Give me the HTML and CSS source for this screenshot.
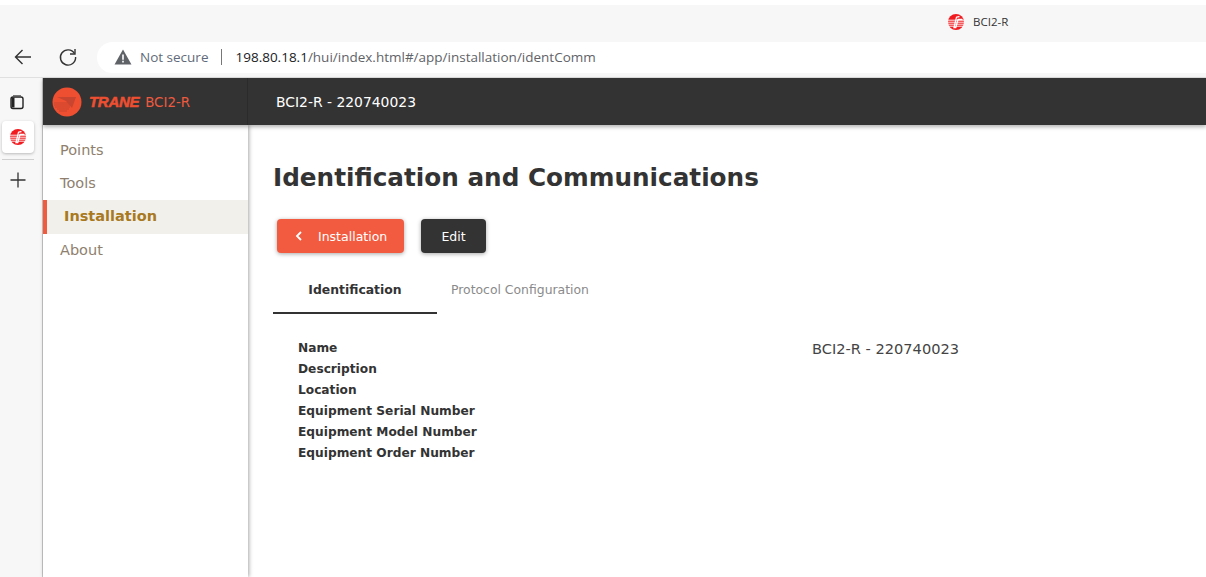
FILE: index.html
```html
<!DOCTYPE html>
<html lang="en">
<head>
<meta charset="utf-8">
<title>BCI2-R</title>
<link rel="stylesheet" href="styles.css">
</head>
<body>
<div class="titlebar">
  <div class="tab">
    <svg class="favicon" viewBox="0 0 16 16"><use href="#fav"/></svg>
    <span>BCI2-R</span>
  </div>
</div>
<div class="toolbar">
  <svg class="tool-icon back" viewBox="0 0 20 20"><path d="M18 10H2.5M9.5 3l-7 7 7 7" fill="none" stroke="#333" stroke-width="1.4"/></svg>
  <svg class="tool-icon reload" viewBox="0 0 20 20"><path d="M16.5 6.5A7.6 7.6 0 1 0 17.6 10" fill="none" stroke="#333" stroke-width="1.4"/><path d="M17 2v5h-5" fill="none" stroke="#333" stroke-width="1.4"/></svg>
  <div class="omnibox">
    <svg class="warn" viewBox="0 0 18 16"><path d="M9 0.5 17.5 15.5H0.5Z" fill="#5f6368"/><path d="M8.2 5.5h1.6v5.2H8.2zM8.2 11.8h1.6v1.6H8.2z" fill="#fff"/></svg>
    <span class="not-secure">Not secure</span>
    <span class="sep"></span>
    <span class="url"><b>198.80.18.1</b>/hui/index.html#/app/installation/identComm</span>
  </div>
</div>
<div class="window">
  <aside class="rail">
    <svg class="rail-icon" viewBox="0 0 16 16"><rect x="2" y="3" width="12" height="11.5" rx="2" fill="none" stroke="#222" stroke-width="1.4"/><path d="M2.5 3.5v10h3v-10z" fill="#222"/><path d="M4 1.5h8" stroke="#777" stroke-width="1"/></svg>
    <div class="rail-tab">
      <svg class="favicon" viewBox="0 0 16 16">
        <defs>
          <g id="fav">
            <circle cx="8" cy="8" r="8" fill="#f01a1f"/>
            <path d="M0 6.2h16M0 8.2h16M0 10.2h16M0 12.2h16" stroke="#fff" stroke-width="0.9"/>
            <path d="M11.5 2.5 8.5 3.2 6 13.5H7.8L10 5.5H14.5" fill="none" stroke="#fff" stroke-width="1.3"/>
          </g>
        </defs>
        <use href="#fav"/>
      </svg>
    </div>
    <span class="rail-rule"></span>
    <svg class="rail-plus" viewBox="0 0 16 16"><path d="M8 0.5v15M0.5 8h15" stroke="#333" stroke-width="1.3"/></svg>
  </aside>
  <div class="app">
    <header class="app-header">
      <div class="brand">
        <svg class="brand-mark" viewBox="0 0 30 30">
          <circle cx="15" cy="15" r="14.5" fill="#ee4f31"/>
          <path d="M2 16h18M2 18h17M3 20h15M5 22h12M7 24h8" stroke="#c9452f" stroke-width="1"/>
          <path d="M5 10 24 10 20 21 14 14Z" fill="#c9452f"/>
        </svg>
        <span class="brand-word">TRANE</span>
        <span class="brand-name">BCI2-R</span>
      </div>
      <div class="device-title">BCI2-R - 220740023</div>
    </header>
    <div class="app-body">
      <nav class="side">
        <a class="side-item">Points</a>
        <a class="side-item">Tools</a>
        <a class="side-item active">Installation</a>
        <a class="side-item">About</a>
      </nav>
      <main class="content">
        <h1>Identification and Communications</h1>
        <div class="buttons">
          <button class="btn btn-primary"><svg class="chev" viewBox="0 0 8 10"><path d="M6 1 2 5l4 4" fill="none" stroke="#fff" stroke-width="1.8"/></svg>Installation</button>
          <button class="btn btn-dark">Edit</button>
        </div>
        <div class="tabs">
          <div class="tab-item current">Identification</div>
          <div class="tab-item">Protocol Configuration</div>
        </div>
        <div class="fields">
          <div class="labels">
            <div>Name</div>
            <div>Description</div>
            <div>Location</div>
            <div>Equipment Serial Number</div>
            <div>Equipment Model Number</div>
            <div>Equipment Order Number</div>
          </div>
          <div class="value">BCI2-R - 220740023</div>
        </div>
      </main>
    </div>
  </div>
</div>
</body>
</html>
```

FILE: styles.css
```css
* { box-sizing: border-box; }
html, body { height: 100%; }
body {
  margin: 0;
  height: 577px;
  overflow: hidden;
  display: flex;
  flex-direction: column;
  padding-top: 5px;
  background: #fff;
  font-family: "DejaVu Sans", sans-serif;
  color: #333;
}
.titlebar {
  height: 37px;
  flex: none;
  background: #f7f7f7;
  display: flex;
  padding-left: 948px;
}
.tab {
  display: flex;
  align-items: center;
  gap: 9px;
  height: 33px;
  font-family: "Open Sans", sans-serif;
  font-size: 11.5px;
  color: #333;
}
.favicon { width: 16px; height: 16px; display: block; }
.toolbar {
  height: 36px;
  flex: none;
  background: #f7f7f7;
  display: flex;
  align-items: flex-start;
  padding-left: 13px;
  border-bottom: 1px solid #e0e0e0;
}
.tool-icon { width: 20px; height: 20px; flex: none; margin-top: 5px; }
.reload { margin-left: 25px; }
.omnibox {
  margin-left: 19px;
  flex: 1;
  height: 31px;
  background: #fff;
  border-radius: 16px 0 0 16px;
  display: flex;
  align-items: center;
  padding: 0 0 1px 17px;
  font-family: "Open Sans", sans-serif;
  font-size: 13.5px;
}
.warn { width: 18px; height: 16px; flex: none; }
.not-secure { margin-left: 8px; color: #5f6b7a; }
.sep { width: 1px; height: 16px; background: #777; margin: 0 13px 0 13px; }
.url { color: #5f6368; }
.url b { font-weight: 400; color: #202124; }
.window { flex: 1; display: flex; min-height: 0; }
.rail {
  width: 43px;
  flex: none;
  background: #f7f7f7;
  border-right: 1px solid #c9c9c9;
  display: flex;
  flex-direction: column;
  align-items: center;
  padding-top: 16px;
}
.rail-icon { width: 16px; height: 16px; margin-left: -8px; }
.rail-tab {
  width: 32px;
  height: 32px;
  margin: 11px 0 0 -7px;
  background: #fff;
  border-radius: 4px;
  box-shadow: 0 1px 3px rgba(0,0,0,.25);
  display: flex;
  align-items: center;
  justify-content: center;
}
.rail-rule { width: 32px; height: 1px; background: #d0d0d0; margin: 6px 0 0 -7px; }
.rail-plus { width: 16px; height: 16px; margin: 12px 0 0 -6px; }
.app { flex: 1; display: flex; flex-direction: column; min-width: 0; }
.app-header {
  height: 47px;
  flex: none;
  background: #333;
  display: flex;
  align-items: center;
  box-shadow: 0 2px 4px rgba(0,0,0,.3);
  position: relative;
  z-index: 2;
}
.brand {
  width: 205px;
  height: 100%;
  display: flex;
  align-items: center;
  padding-left: 9px;
  border-right: 1px solid #2b2b2b;
}
.brand-mark { width: 30px; height: 30px; flex: none; }
.brand-word {
  margin-left: 7px;
  font-family: "Liberation Sans", sans-serif;
  font-weight: 700;
  font-style: italic;
  font-size: 15px;
  letter-spacing: -0.3px;
  color: #ee4f31;
  -webkit-text-stroke: 0.5px #ee4f31;
}
.brand-name { margin: 1px 0 0 6px; font-size: 13.4px; color: #ed5a3f; }
.device-title { margin: 1px 0 0 28px; font-size: 13.9px; color: #fff; }
.app-body { flex: 1; display: flex; min-height: 0; }
.side {
  width: 205px;
  flex: none;
  background: #fff;
  box-shadow: 1px 0 4px rgba(0,0,0,.35);
  padding-top: 9px;
  position: relative;
  z-index: 1;
}
.side-item {
  display: block;
  height: 33px;
  line-height: 33px;
  padding-left: 17px;
  font-size: 14.5px;
  color: #8f7f6e;
}
.side-item.active {
  height: 34px;
  background: #f2f0ea;
  border-left: 4px solid #f15a3c;
  font-weight: 700;
  color: #a8791f;
  font-size: 14.5px;
  padding-left: 17px;
}
.content { flex: 1; min-width: 0; padding: 37px 0 0 25px; }
h1 {
  margin: 0;
  font-size: 24.7px;
  line-height: 32px;
  font-weight: 700;
  color: #333;
}
.buttons { display: flex; gap: 17px; margin: 25px 0 0 4px; }
.btn {
  height: 34px;
  border: 0;
  border-radius: 4px;
  color: #fff;
  font-family: "DejaVu Sans", sans-serif;
  font-size: 12.5px;
  display: flex;
  align-items: center;
  box-shadow: 0 1px 4px rgba(0,0,0,.35);
}
.btn-primary { width: 127px; background: #f35b40; padding-left: 18px; }
.chev { width: 8px; height: 10px; margin-right: 15px; }
.btn-dark { width: 65px; background: #333; justify-content: center; }
.tabs { display: flex; margin-top: 20px; }
.tab-item {
  height: 41px;
  line-height: 33px;
  font-size: 12.4px;
  color: #8a8a8a;
  padding: 0 14px;
}
.tab-item.current {
  width: 164px;
  padding: 0;
  text-align: center;
  color: #333;
  font-weight: 700;
  border-bottom: 2px solid #333;
}
.fields { display: flex; padding: 24px 0 0 25px; }
.labels {
  width: 514px;
  flex: none;
  font-size: 12.2px;
  font-weight: 700;
  line-height: 21.1px;
  color: #333;
}
.value { font-size: 14.6px; line-height: 22px; color: #444; }
```
